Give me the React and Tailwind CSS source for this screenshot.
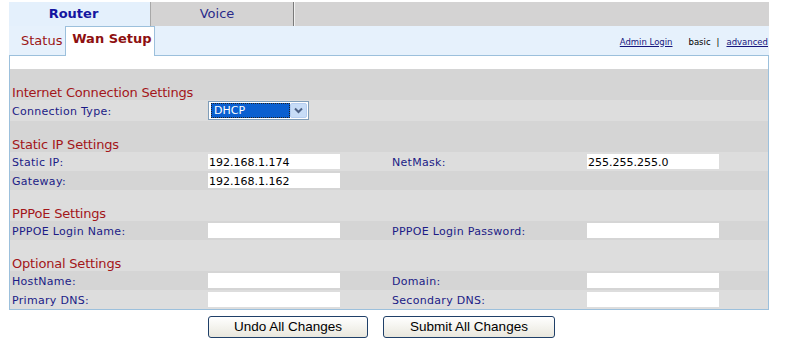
import React from "react";

const band = "bg-[#d5d5d5]";
const light = "bg-[#dddddd]";

function Title({ children, bg }) {
  return (
    <div className={`h-[31px] ${bg} flex items-end pl-[2px]`}>
      <span className="text-[13px] leading-[14px] text-[#a3161a] font-['DejaVu_Sans'] tracking-[-0.2px]">{children}</span>
    </div>
  );
}

function Label({ children }) {
  return <div className="pl-[2px] pt-[3px] text-[11px] tracking-[0.3px] text-[#1b1b86] flex items-center">{children}</div>;
}

function Input({ value }) {
  return (
    <div className="flex items-center">
      <div className="w-[132px] h-[15px] bg-white text-[11px] leading-[17px] text-black pl-[1px] overflow-hidden">{value}</div>
    </div>
  );
}

function Row({ bg, cells }) {
  return (
    <div className={`grid grid-cols-[198px_182px_197px_181px] h-[19px] ${bg}`}>
      {cells}
    </div>
  );
}

export default function App() {
  return (
    <div className="w-[787px] h-[344px] bg-white overflow-hidden font-['DejaVu_Sans',sans-serif]">
      <div className="ml-[9px] w-[760px] pt-[2px]">
        {/* top tabs */}
        <div className="flex h-[24px]">
          <div className="w-[142px] bg-[#e4f0fc] border-r border-[#a8a8a8] flex items-center justify-center pr-[12px] text-[13px] font-bold text-[#1515a0]">
            Router
          </div>
          <div className="w-[143px] bg-[#d4d3d3] border-r border-[#7a7a7a] flex items-center justify-center pr-[10px] text-[13px] text-[#2b2b8a]">
            Voice
          </div>
          <div className="flex-1 bg-[#d4d3d3] border-l border-[#f0f0f0]"></div>
        </div>
        {/* sub tabs */}
        <div className="flex h-[29px] bg-[#e6f1fc] relative">
          <div className="pl-[12px] pr-[3px] flex items-center pt-[1px] text-[13px] text-[#9b1616]">Status</div>
          <div className="relative z-10 w-[90px] h-[30px] bg-white border-l border-t border-r border-[#9cc0dc] flex items-start justify-center pl-[3px] pt-[2px] text-[13px] font-bold text-[#8e1010]">
            Wan Setup
          </div>
          <div className="ml-auto flex items-center pt-[3px] text-[8.5px] pr-[1px]">
            <span className="underline text-[#16167e]">Admin Login</span>
            <span className="ml-[16px] text-black">basic</span>
            <span className="ml-[6px] text-black">|</span>
            <span className="ml-[7px] underline text-[#16167e]">advanced</span>
          </div>
        </div>
        {/* content box */}
        <div className="border border-[#9cc0dc] bg-white">
          <div className="h-[13px] bg-white"></div>
          <Title bg={band}>Internet Connection Settings</Title>
          <div className={`grid grid-cols-[198px_182px_197px_181px] h-[21px] ${light}`}>
            <Label>Connection Type:</Label>
            <div className="flex items-center">
              <div className="w-[101px] h-[19px] border border-[#7f9db9] bg-white flex items-center p-[1px]">
                <div className="w-[80px] h-[15px] ml-[1px] bg-[#0a5fd0] border border-dotted border-[#222] text-white text-[11px] leading-[14px] pl-[2px]">
                  DHCP
                </div>
                <div className="ml-auto w-[17px] h-[15px] bg-[#c7dcf7] border border-[#b5cdf0] rounded-[2px] flex items-center justify-center">
                  <svg width="9" height="7" viewBox="0 0 9 7">
                    <path d="M1 1.5 L4.5 5 L8 1.5" stroke="#4d6185" strokeWidth="2" fill="none" />
                  </svg>
                </div>
              </div>
            </div>
            <div></div>
            <div></div>
          </div>
          <Title bg={band}>Static IP Settings</Title>
          <Row
            bg={light}
            cells={[
              <Label key="a">Static IP:</Label>,
              <Input key="b" value="192.168.1.174" />,
              <Label key="c">NetMask:</Label>,
              <Input key="d" value="255.255.255.0" />,
            ]}
          />
          <Row
            bg={band}
            cells={[
              <Label key="a">Gateway:</Label>,
              <Input key="b" value="192.168.1.162" />,
              <div key="c"></div>,
              <div key="d"></div>,
            ]}
          />
          <Title bg={light}>PPPoE Settings</Title>
          <Row
            bg={band}
            cells={[
              <Label key="a">PPPOE Login Name:</Label>,
              <Input key="b" value="" />,
              <Label key="c">PPPOE Login Password:</Label>,
              <Input key="d" value="" />,
            ]}
          />
          <Title bg={light}>Optional Settings</Title>
          <Row
            bg={band}
            cells={[
              <Label key="a">HostName:</Label>,
              <Input key="b" value="" />,
              <Label key="c">Domain:</Label>,
              <Input key="d" value="" />,
            ]}
          />
          <Row
            bg={light}
            cells={[
              <Label key="a">Primary DNS:</Label>,
              <Input key="b" value="" />,
              <Label key="c">Secondary DNS:</Label>,
              <Input key="d" value="" />,
            ]}
          />
        </div>
        {/* buttons */}
        <div className="flex mt-[6px] pl-[199px] gap-[15px] font-['Liberation_Sans',sans-serif]">
          <button className="w-[160px] h-[22px] rounded-[3px] border border-[#1f3f68] bg-gradient-to-b from-white to-[#e9e7dd] text-[13.5px] text-black leading-[20px]">
            Undo All Changes
          </button>
          <button className="w-[172px] h-[22px] rounded-[3px] border border-[#1f3f68] bg-gradient-to-b from-white to-[#e9e7dd] text-[13.5px] text-black leading-[20px]">
            Submit All Changes
          </button>
        </div>
      </div>
    </div>
  );
}
